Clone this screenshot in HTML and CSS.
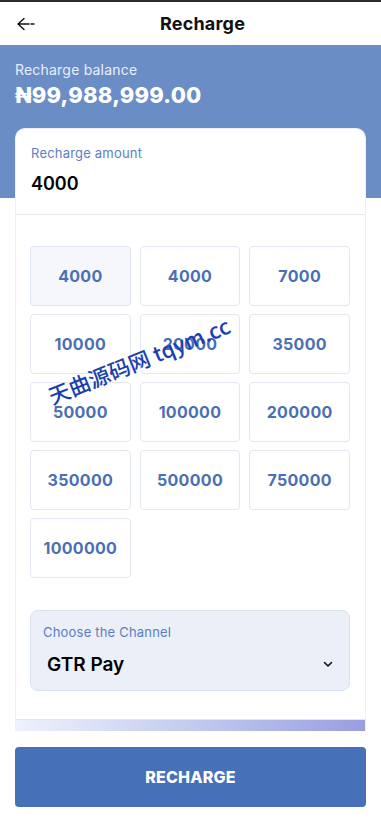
FILE: index.html
```html
<!DOCTYPE html>
<html>
<head>
<meta charset="utf-8">
<link rel="stylesheet" href="styles.css">
</head>
<body>
<div class="topline"></div>
<header class="header">
  <span class="back">
    <svg width="20" height="14" viewBox="0 0 20 14"><path d="M8 1.5 L2 7 L8 12.5 M2 7 H13 M15 7 H18" fill="none" stroke="#111" stroke-width="1.4" stroke-linecap="round" stroke-linejoin="round"/></svg>
  </span>
  <h1 class="title">Recharge</h1>
</header>
<section class="hero">
  <div class="hero-label">Recharge balance</div>
  <div class="hero-balance">₦99,988,999.00</div>
</section>
<main class="card">
  <div class="amount">
    <div class="amount-label">Recharge amount</div>
    <div class="amount-value">4000</div>
  </div>
  <div class="body">
    <div class="grid">
      <div class="cell active">4000</div>
      <div class="cell">4000</div>
      <div class="cell">7000</div>
      <div class="cell">10000</div>
      <div class="cell">20000</div>
      <div class="cell">35000</div>
      <div class="cell">50000</div>
      <div class="cell">100000</div>
      <div class="cell">200000</div>
      <div class="cell">350000</div>
      <div class="cell">500000</div>
      <div class="cell">750000</div>
      <div class="cell">1000000</div>
    </div>
    <div class="channel">
      <div class="channel-label">Choose the Channel</div>
      <div class="channel-row">
        <span class="channel-value">GTR Pay</span>
        <svg class="chev" width="10" height="7" viewBox="0 0 10 7"><path d="M1.5 1.5 L5 5 L8.5 1.5" fill="none" stroke="#111" stroke-width="1.6" stroke-linecap="round" stroke-linejoin="round"/></svg>
      </div>
    </div>
  </div>
  <div class="strip"></div>
</main>
<div class="footer">
  <button class="btn">RECHARGE</button>
</div>
<div class="watermark">天曲源码网 tqym.cc</div>
</body>
</html>
```
FILE: styles.css
```css
* { box-sizing: border-box; }
html, body { margin: 0; padding: 0; }
body {
  width: 381px;
  height: 830px;
  overflow: hidden;
  background: #fff;
  font-family: Inter, "Noto Sans", "DejaVu Sans", sans-serif;
  position: relative;
}
.topline { height: 2px; background: #2e2e2e; }
.header {
  height: 43px;
  display: flex;
  align-items: center;
  justify-content: center;
  position: relative;
  background: #fff;
}
.back {
  position: absolute;
  left: 16px;
  top: 15px;
  display: flex;
}
.title {
  margin: 0 0 0 24px;
  font-size: 18px;
  font-weight: 700;
  color: #111;
  letter-spacing: 0.2px;
}
.hero {
  height: 153px;
  background: #6a8dc6;
  padding: 15px 15px 0;
}
.hero-label {
  font-size: 14px;
  line-height: 20px;
  color: #e8eefa;
  font-weight: 400;
  letter-spacing: 0.2px;
}
.hero-balance {
  font-size: 22px;
  line-height: 30px;
  font-weight: 800;
  color: #fff;
  letter-spacing: 0.2px;
}
.card {
  margin: -70px 15px 0;
  height: 603px;
  background: #fff;
  border: 1px solid #eef0f5;
  border-bottom: none;
  border-radius: 10px 10px 0 0;
  overflow: hidden;
  display: flex;
  flex-direction: column;
  position: relative;
}
.amount {
  padding: 15px 15px 18px;
  border-bottom: 1px solid #e6e9f1;
}
.amount-label {
  font-size: 13px;
  line-height: 18px;
  color: #5b7ec2;
  letter-spacing: 0.2px;
}
.amount-value {
  margin-top: 10px;
  font-size: 18px;
  line-height: 24px;
  font-weight: 600;
  color: #000;
}
.body {
  flex: 1;
  padding: 31px 15px 0 14px;
}
.grid {
  display: grid;
  grid-template-columns: repeat(3, 1fr);
  grid-auto-rows: 60px;
  column-gap: 9px;
  row-gap: 8px;
}
.cell {
  border: 1px solid #e2e7f2;
  border-radius: 4px;
  display: flex;
  align-items: center;
  justify-content: center;
  font-size: 16px;
  font-weight: 700;
  color: #4b6fb5;
  background: #fff;
  letter-spacing: 0.3px;
}
.cell.active { background: #f5f7fc; border-color: #dde3f0; }
.channel {
  margin-top: 32px;
  height: 81px;
  background: #ebeff8;
  border: 1px solid #d9e1f1;
  border-radius: 8px;
  padding: 12px 16px 0 12px;
}
.channel-label {
  font-size: 13px;
  line-height: 18px;
  color: #5b7ec2;
  letter-spacing: 0.2px;
}
.channel-row {
  margin-top: 11px;
  display: flex;
  align-items: center;
  justify-content: space-between;
  padding-left: 4px;
}
.channel-value {
  font-size: 19px;
  line-height: 26px;
  font-weight: 600;
  color: #000;
}
.chev { margin-top: -2px; }
.strip {
  height: 12px;
  background: linear-gradient(90deg, #eef2fc 0%, #c3cbef 50%, #989ee0 100%);
  border-top: 1px solid #dfe4f6;
  margin-top: auto;
}
.footer {
  padding: 16px 15px 0;
}
.btn {
  width: 100%;
  height: 60px;
  border: none;
  border-radius: 4px;
  background: #4670b7;
  color: #fff;
  font-family: Inter, "Noto Sans", "DejaVu Sans", sans-serif;
  font-size: 16px;
  font-weight: 800;
  letter-spacing: 0.2px;
}
.watermark {
  position: absolute;
  left: 42px;
  top: 345px;
  width: 190px;
  font-family: "Noto Sans CJK SC", "Noto Sans", sans-serif;
  font-size: 21.5px;
  font-weight: 500;
  color: #1c3fae;
  white-space: nowrap;
  transform: rotate(-22deg);
  transform-origin: center;
  pointer-events: none;
}
```
